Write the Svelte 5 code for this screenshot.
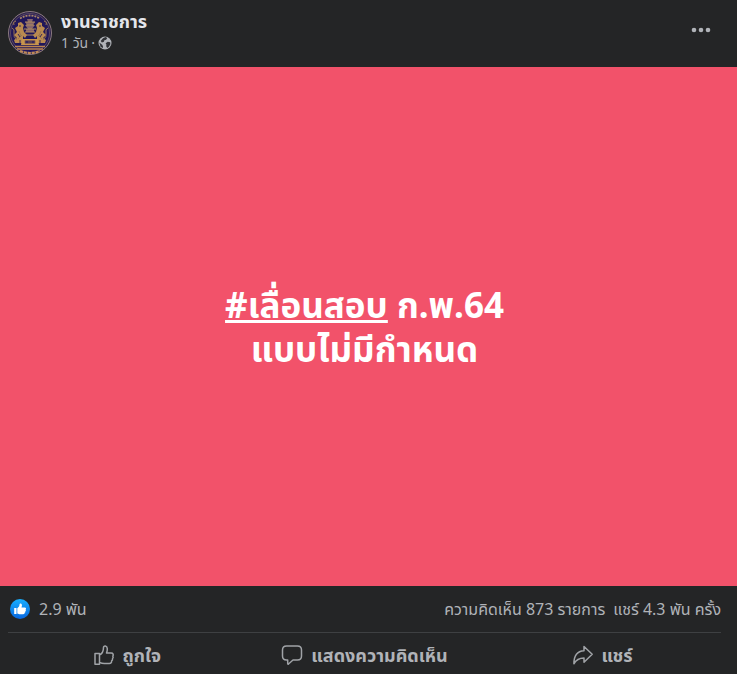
<script>
  const pageName = 'งานราชการ';
  const likes = '2.9 พัน';
  const dots = [4, 11, 18];
  const lions = ['', 'translate(44 0) scale(-1 1)'];
</script>

<article class="post">
  <header class="head">
    <a class="avatar" href="#page" aria-label={pageName}>
      <svg viewBox="0 0 44 44" aria-hidden="true">
        <circle cx="22" cy="22" r="21.5" fill="#2b2148" stroke="#8c7a80" />
        <circle cx="22" cy="22" r="19.5" fill="#21175a" stroke="#66526a" stroke-width="0.8" />
        <path d="M12 7.5Q22 1.5 32 7.5" fill="none" stroke="#a98666" stroke-width="1.8" stroke-dasharray="2 1" />
        <path d="M19 8h6l-1 3h3l-2 3h2l-3 4h2v3h-8v-3h2l-3-4h2l-2-3h3z" fill="#87666a" />
        <path d="M17 11h10M18 14h8M16 18h12M17 21h10M15 24h14" stroke="#b08a5c" stroke-width="1" />
        {#each lions as transform}
          <g {transform}>
            <path d="M10 12l3-1 3 3-1 3 1 4 3 3-2 3-2-2v7H7l-1-3 3-2-3-3 3-3-2-4 3-2z" fill="#b98a50" />
            <path d="M4 17q3 1 2 5t3 7M6 14q-2-3 2-4M11 20l2 5M10 28l4-4" fill="none" stroke="#9a7650" stroke-width="1" />
            <path d="M11 15h2M10 23l2 3M12 29v3" stroke="#352655" stroke-width="1" />
          </g>
        {/each}
        <path d="M14 28h16l1 6H13z" fill="#c8954c" />
        <path d="M17 29.500h10v3H17zM20 31h4" fill="#34265a" stroke="#805e50" stroke-width="0.8" />
        <path d="M7 35.500h30M9 38h26" stroke="#b98451" stroke-width="1.600" />
        <path d="M12 40q10 4 20 0" fill="none" stroke="#c08b57" stroke-width="2.200" stroke-dasharray="3 1" />
      </svg>
    </a>
    <div class="who">
      <a class="name" href="#page">{pageName}</a>
      <div class="meta">
        <a href="#post">1 วัน</a>
        <span>·</span>
        <svg class="globe" viewBox="0 0 14 14" role="img" aria-label="สาธารณะ">
          <circle cx="7" cy="7" r="6.500" fill="#b0b3b8" />
          <path d="M5 2.200L7.500 1l1.800 1-1.200 1.700-1.800.6-.4 1.500-2 .7L2.700 5z" fill="#303236" />
          <path d="M7.600 7.200l2.200-1.400 2.400.4.2 2.100-1.700 2.600-1.500 1-1-1.700.2-1.600z" fill="#303236" />
          <path d="M1.300 6.600l2.200 1.700 1.500 1.800-.3 2.100-2.200-1.600z" fill="#303236" />
        </svg>
      </div>
    </div>
    <button class="more" aria-label="เพิ่มเติม">
      <svg viewBox="0 0 23 20" aria-hidden="true">
        {#each dots as cx}
          <circle {cx} cy="10" r="2.300" />
        {/each}
      </svg>
    </button>
  </header>

  <div class="message">
    <p><a href="#tag">#เลื่อนสอบ</a> ก.พ.64<br />แบบไม่มีกำหนด</p>
  </div>

  <footer class="foot">
    <div class="stats">
      <button class="likes">
        <svg viewBox="0 0 20 20" aria-hidden="true">
          <defs>
            <linearGradient id="like-blue" x1="0" y1="0" x2="0" y2="1">
              <stop offset="0" stop-color="#18afff" />
              <stop offset="1" stop-color="#0866df" />
            </linearGradient>
          </defs>
          <circle cx="10" cy="10" r="10" fill="url(#like-blue)" />
          <path d="M4.200 9h2.300v6H4.200zM7.300 9.200C9 8.200 9.500 7 9.600 5.100c.1-1 2-.9 2.300.7.2 1-.2 2-.4 2.700h3.200c1.500 0 1.700 1.500.9 2 .6.700.3 1.500-.3 1.800.3.700 0 1.300-.6 1.500.1.900-.5 1.400-1.500 1.400h-2.800c-1.300 0-2.100-.3-3.100-.8z" fill="#fff" />
        </svg>
        <span>{likes}</span>
      </button>
      <div class="counts">
        <button>ความคิดเห็น 873 รายการ</button>
        <button>แชร์ 4.3 พัน ครั้ง</button>
      </div>
    </div>
    <div class="actions">
      <button>
        <svg viewBox="0 0 22 22" aria-hidden="true">
          <path d="M2 9.500h4.500v10.700H2zM6.500 11c2.700-1.400 4-3.600 4-7.600 0-1.900 3.500-2 3.800 1.200.1 1.700-.3 3.100-.8 4.500h4.700c1.900 0 2.600 1.700 1.600 3 .5.900.4 1.900-.3 2.600.2 1-.1 1.800-.9 2.300.2 1.600-.7 2.500-2.200 2.500h-5.100c-2 0-3.400-.5-4.800-1.200" />
        </svg>
        <span>ถูกใจ</span>
      </button>
      <button>
        <svg viewBox="0 0 22 22" aria-hidden="true">
          <path d="M5.500 2h11Q20.500 2 20.500 6v6q0 4-4 4H12l-4.500 4q-.8.500-.8-.5V16H5.500q-4 0-4-4V6q0-4 4-4z" />
        </svg>
        <span>แสดงความคิดเห็น</span>
      </button>
      <button>
        <svg viewBox="0 0 22 22" aria-hidden="true">
          <path d="M12 2.500v4.300C5.500 7.200 1.900 11.800 1.900 19.800c2.400-4.500 5.100-5.900 10.100-5.900v4.300l8.200-7.900z" />
        </svg>
        <span>แชร์</span>
      </button>
    </div>
  </footer>
</article>

<style>
  :global(body) {
    margin: 0;
    background: #242526;
  }

  .post {
    color: #b0b3b8;
    background: #242526;
    font-family: 'Noto Sans', 'Noto Sans Thai', sans-serif;
    font-size: 16px;
    line-height: 20px;
  }

  a {
    color: inherit;
    text-decoration: none;
  }

  button {
    padding: 0;
    border: 0;
    color: inherit;
    background: none;
    font: inherit;
    cursor: pointer;
  }

  svg {
    display: block;
    flex: none;
  }

  .head {
    display: flex;
    align-items: flex-start;
    gap: 9px;
    padding: 11px 24px 12px 8px;
  }

  .avatar svg {
    width: 44px;
    height: 44px;
  }

  .who {
    display: grid;
    flex: 1;
    gap: 2px;
  }

  .name {
    color: #e4e6eb;
    font-size: 18px;
    font-weight: 700;
  }

  .meta {
    display: flex;
    align-items: center;
    gap: 3px;
    font-size: 14px;
  }

  .globe {
    width: 14px;
    height: 14px;
  }

  .more {
    padding: 9px 0;
  }

  .more svg {
    width: 23px;
    height: 20px;
    fill: #b0b3b8;
  }

  .message {
    display: flex;
    align-items: center;
    justify-content: center;
    aspect-ratio: 71 / 50;
    box-sizing: border-box;
    padding-right: 8px;
    color: #fff;
    background: #f2526a;
  }

  .message p {
    margin: 0;
    font-size: 35px;
    font-weight: 700;
    line-height: 44px;
    text-align: center;
  }

  .message a {
    text-decoration: underline;
    text-decoration-thickness: 3px;
  }

  .foot {
    padding: 0 16px 0 8px;
  }

  .stats {
    display: flex;
    justify-content: space-between;
    padding: 13px 0;
    border-bottom: 1px solid #3e4042;
  }

  .likes {
    display: flex;
    align-items: center;
    gap: 9px;
    padding-left: 2px;
  }

  .likes svg {
    width: 20px;
    height: 20px;
  }

  .counts {
    display: flex;
    gap: 8px;
  }

  .actions {
    display: grid;
    grid-template-columns: 1fr 1fr 1fr;
  }

  .actions button {
    display: flex;
    align-items: center;
    justify-content: center;
    gap: 8px;
    height: 44px;
    margin-bottom: -3px;
    font-size: 18px;
    font-weight: 700;
  }

  .actions svg {
    width: 22px;
    height: 22px;
    fill: none;
    stroke: #a0a3a7;
    stroke-width: 1.5;
    stroke-linejoin: round;
  }
</style>
